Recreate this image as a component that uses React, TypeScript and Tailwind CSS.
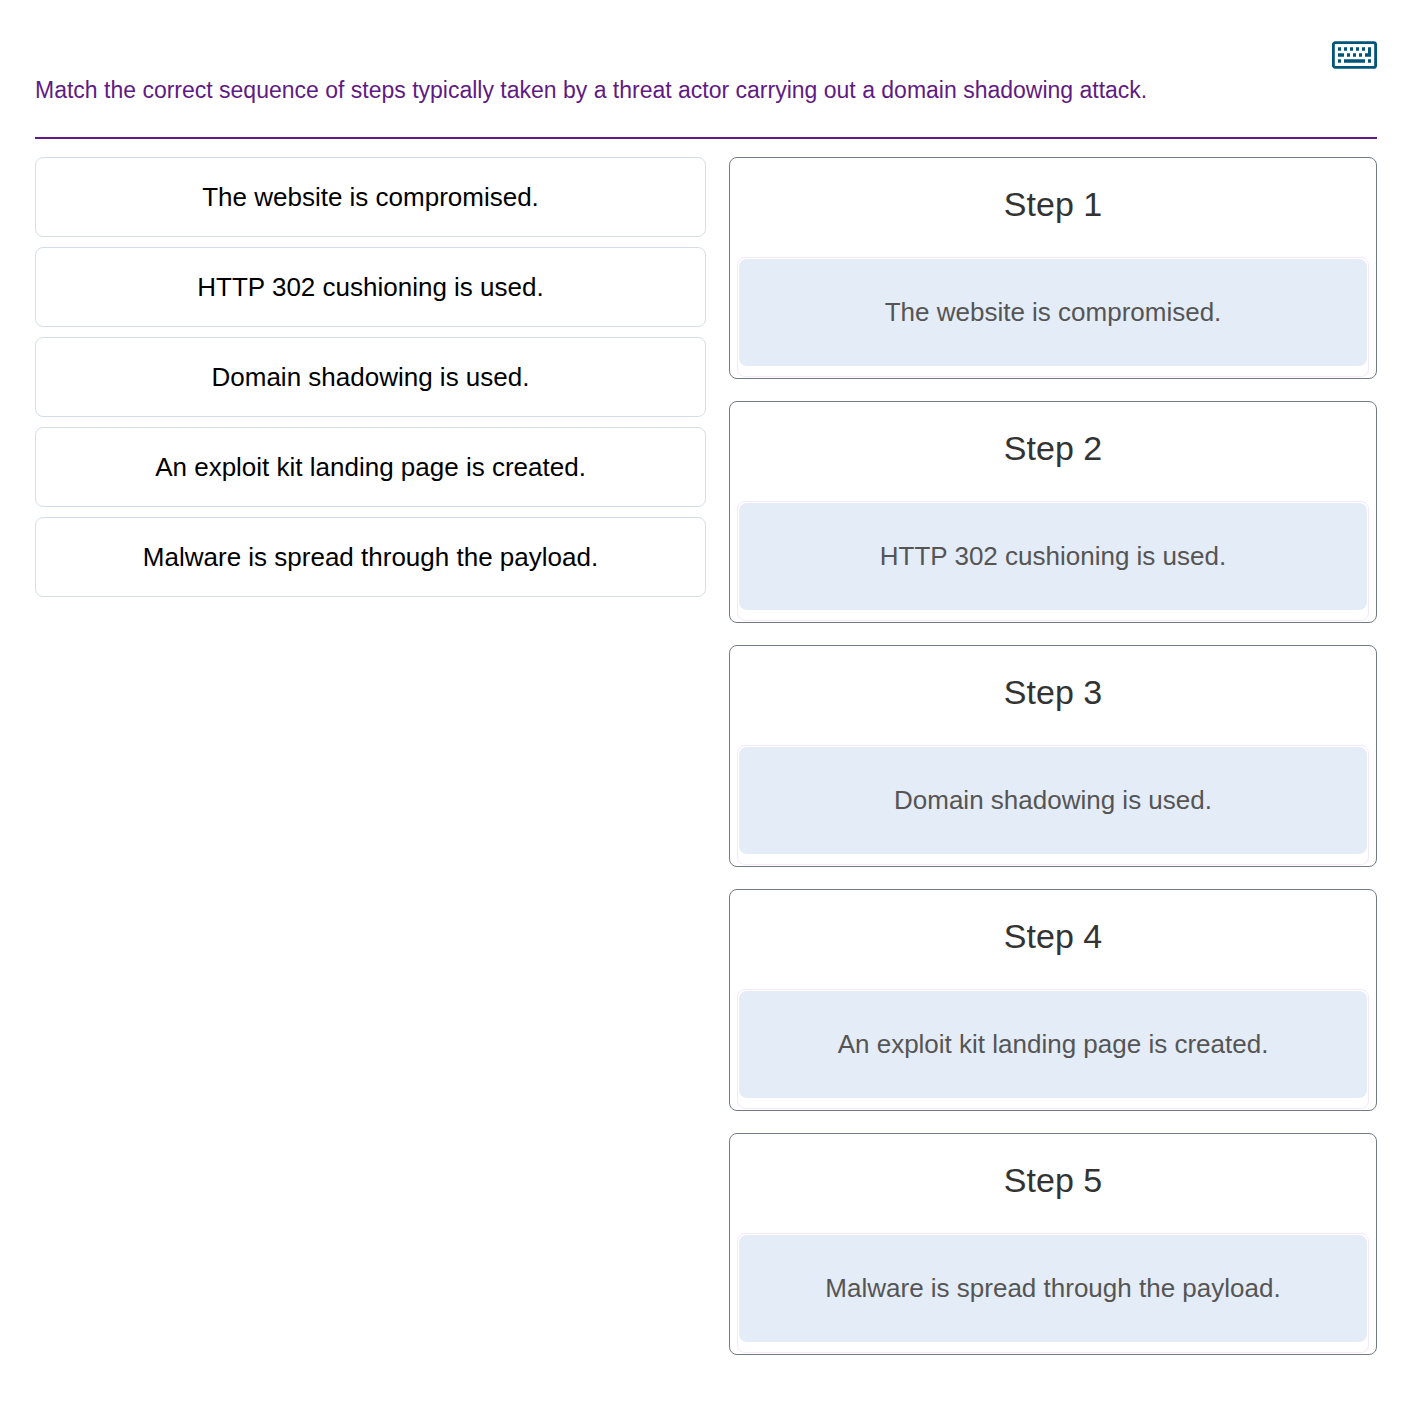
const answers = [
  'The website is compromised.',
  'HTTP 302 cushioning is used.',
  'Domain shadowing is used.',
  'An exploit kit landing page is created.',
  'Malware is spread through the payload.',
];

function KeyboardIcon() {
  return (
    <svg viewBox="0 0 45 28" className="h-7 w-[45px]" fill="#00557a" aria-hidden="true">
      <rect x="1.4" y="1.6" width="42.2" height="24.8" rx="2" fill="none" stroke="#00557a" strokeWidth="2.8" />
      <path d="M6 6.3h3v3.4H6zM12 6.3h3v3.4h-3zM18 6.3h3v3.4h-3zM24 6.3h3v3.4h-3zM30 6.3h3v3.4h-3z" />
      <path d="M6 12.3h6v3.4H6zM15 12.3h3v3.4h-3zM21 12.3h3v3.4h-3zM27 12.3h3v3.4h-3z" />
      <path d="M36 6.3h3v9.4h-6v-3.4h3z" />
      <path d="M6 18.3h3v3.4H6zM12 18.3h21v3.4H12zM36 18.3h3v3.4h-3z" />
    </svg>
  );
}

export default function App() {
  return (
    <main className="bg-white pt-[41px] pr-6 pb-[50px] pl-[35px] font-['Liberation_Sans',Arial,sans-serif]">
      <header className="border-b-2 border-[#5f1a85] pb-[31px]">
        <div className="flex justify-end">
          <button type="button" aria-label="Keyboard instructions">
            <KeyboardIcon />
          </button>
        </div>
        <h1 className="mt-[5px] text-[23px] leading-8 text-[#5f1a85]">
          Match the correct sequence of steps typically taken by a threat actor carrying out a domain shadowing attack.
        </h1>
      </header>

      <div className="mt-[18px] grid grid-cols-[671fr_648fr] items-start gap-[23px]">
        <ul className="flex flex-col gap-[10px]">
          {answers.map((answer) => (
            <li key={answer}>
              <button
                type="button"
                className="block w-full cursor-grab rounded-lg border border-[#d5dfea] px-4 py-6 text-center text-[26px] leading-[30px] text-black"
              >
                {answer}
              </button>
            </li>
          ))}
        </ul>

        <ol className="flex flex-col gap-[22px]">
          {answers.map((answer, index) => (
            <li key={answer} className="rounded-lg border border-[#727b84] px-[7px] pb-px text-center">
              <h2 className="pt-[26px] pb-[33px] text-[34px] leading-[40px] text-[#333333]">Step {index + 1}</h2>
              <div className="rounded-lg border border-[#f5e8fc] px-px pt-px pb-[10px]">
                <button
                  type="button"
                  className="block w-full cursor-grab rounded-lg bg-[#e4ecf7] px-4 py-[38px] text-[26px] leading-[31px] text-[#555555]"
                >
                  {answer}
                </button>
              </div>
            </li>
          ))}
        </ol>
      </div>
    </main>
  );
}
